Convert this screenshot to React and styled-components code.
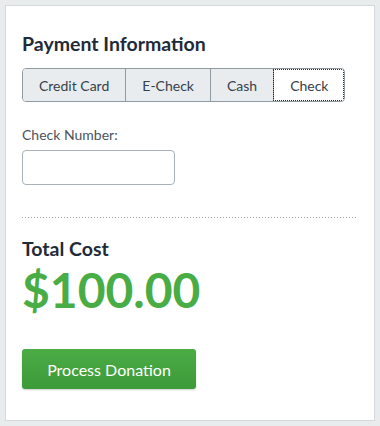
import React, {useState} from 'react';
import styled, {createGlobalStyle} from 'styled-components';

const GlobalStyle = createGlobalStyle`
  html, body {
    margin: 0;
    padding: 0;
    background: #e9eced;
  }
  body {
    font-family: Lato, "Noto Sans", Arial, sans-serif;
    color: #1f2b38;
  }
`;

const methods = ['Credit Card', 'E-Check', 'Cash', 'Check'];

const App = () => {
  const [method, setMethod] = useState('Check');
  const [checkNumber, setCheckNumber] = useState('');

  return (
    <>
      <GlobalStyle />
      <Page>
        <Card>
          <Heading>Payment Information</Heading>
          <TabGroup>
            {methods.map(m => (
              <Tab key={m} type="button" $active={m === method} onClick={() => setMethod(m)}>
                {m}
              </Tab>
            ))}
          </TabGroup>
          <Field>
            <Label htmlFor="check-number">Check Number:</Label>
            <TextInput id="check-number" value={checkNumber} onChange={e => setCheckNumber(e.target.value)} />
          </Field>
          <Divider />
          <Heading as="h3">Total Cost</Heading>
          <Amount>$100.00</Amount>
          <SubmitButton type="button">Process Donation</SubmitButton>
        </Card>
      </Page>
    </>
  );
};

export default App;

const Page = styled.div`
  padding: 5px;
`;

const Card = styled.div`
  box-sizing: border-box;
  height: 416px;
  padding: 26px 16px 0;
  background: #fff;
  border: 1px solid #d3d9dc;
`;

const Heading = styled.h2`
  margin: 0;
  font-size: 19.5px;
  line-height: 24px;
  font-weight: 700;
  color: #1f2b38;
`;

const TabGroup = styled.div`
  display: inline-flex;
  margin-top: 12px;
  border: 1px solid #8f9aa1;
  border-radius: 4px;
  overflow: hidden;
`;

const Tab = styled.button`
  height: 32px;
  padding: 0 16px;
  border: 0;
  border-left: 1px solid #8f9aa1;
  background: ${p => (p.$active ? '#fff' : '#e8ecee')};
  outline: ${p => (p.$active ? '1px dotted #1f2b38' : 'none')};
  outline-offset: -1px;
  font-family: inherit;
  font-size: 14px;
  color: #36414b;
  cursor: pointer;
  &:first-child {
    border-left: 0;
  }
`;

const Field = styled.div`
  display: flex;
  flex-direction: column;
  gap: 7px;
  margin-top: 25px;
`;

const Label = styled.label`
  font-size: 14px;
  line-height: 16px;
  color: #4b535b;
`;

const TextInput = styled.input`
  box-sizing: border-box;
  width: 153px;
  height: 35px;
  border: 1px solid #a9b2b8;
  border-radius: 4px;
  padding: 0 8px;
  font-family: inherit;
  font-size: 14px;
`;

const Divider = styled.div`
  height: 2px;
  margin: 32px 0 18px;
  background-image:
    repeating-linear-gradient(90deg, #9aa4ab 0 1px, transparent 1px 3px);
  background-size: 100% 1px;
  background-repeat: no-repeat;
  background-position: 0 0;
`;

const Amount = styled.div`
  margin-top: 5px;
  font-size: 48px;
  line-height: 48px;
  font-weight: 700;
  color: #49ad46;
`;

const SubmitButton = styled.button`
  display: block;
  margin-top: 35px;
  width: 174px;
  height: 40px;
  border: 0;
  border-radius: 3px;
  background: linear-gradient(#4bac45, #3d9a39);
  box-shadow: 0 1px 2px rgba(0, 0, 0, 0.2);
  color: #fff;
  font-family: inherit;
  font-size: 16px;
  cursor: pointer;
`;
